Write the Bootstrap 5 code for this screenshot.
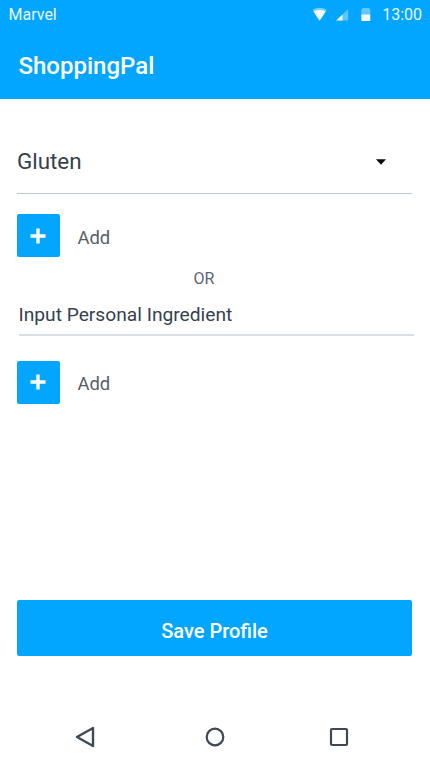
<!DOCTYPE html>
<html lang="en">
<head>
<meta charset="utf-8">
<meta name="viewport" content="width=device-width, initial-scale=1">
<title>ShoppingPal</title>
<link href="https://cdn.jsdelivr.net/npm/bootstrap@5.3.0/dist/css/bootstrap.min.css" rel="stylesheet">
<style>
  body { font-family: Roboto, "Liberation Sans", sans-serif; color: #35414e; height: 763px; overflow: hidden; line-height: 1; background: #fff; }
  svg { display: block; flex: none; }
  .app-header { background: #02a6ff; height: 98.5px; }
  .status-bar { height: 30px; padding: 0 8px 0 8.5px; font-size: 16px; color: #e8f7ff; }
  .app-title { font-size: 24px; font-weight: 500; margin: 24px 0 0 18.5px; line-height: 24px; }
  .app-body { padding: 0 17px; }
  .picker { height: 95px; padding: 32px 26px 0 0; border-bottom: 1px solid #b8c9dc !important; width: 395px; background: none; color: inherit; }
  .picker-label { font-size: 22.4px; line-height: 60px; padding-bottom: 2px; }
  .add-row { margin-top: 20.5px; }
  .add-row-custom { margin-top: 25px; }
  .plus-btn { width: 43px; height: 43px; background: #02a6ff; border-radius: 2px; }
  .plus-btn svg { margin-right: 1px; }
  .add-label { font-size: 18.4px; color: #55606b; margin-left: 17.5px; padding-top: 5px; }
  .divider-text { font-size: 16px; color: #5a6672; line-height: 16px; margin: 14px 0 0 176.5px; }
  .ingredient { font-size: 19.2px; height: 33px; width: 395px; margin: 15.5px 0 0 1.5px; padding: 0 0 7px; border-bottom: 2px solid #d8dfe9 !important; color: #35414e; background: none; }
  .ingredient::placeholder { color: #35414e; opacity: 1; }
  .save-btn, .save-btn:hover { width: 395px; height: 56px; margin-top: 196.5px; padding-top: 11px; background: #02a6ff; border-radius: 2px; font-size: 20px; font-weight: 500; color: #fff; }
  .system-nav { height: 53px; gap: 104px; }
  .back-icon { margin: 0 6px 0 -6px; }
</style>
</head>
<body class="d-flex flex-column">
  <header class="app-header text-white">
    <div class="status-bar d-flex align-items-center justify-content-between">
      <span>Marvel</span>
      <div class="d-flex align-items-center">
        <svg width="70" height="30" viewBox="0 0 70 30">
          <path d="M.5 9.700Q7.600 5.800 14.700 9.700L7.600 20.500z" fill="#7accff"/>
          <path d="M1.500 11.400Q7.600 8.800 13.700 11.400L7.600 20.800z" fill="#f0faff"/>
          <path d="M36.200 9V20.500H24.200z" fill="#5fc4ff"/>
          <path d="M30.500 14.500V20.500H24.200z" fill="#e8f7ff"/>
          <path d="M49.300 9.300L51 7.900H56.700L58.300 9.300V15H49.300z" fill="#65c7ff"/>
          <path d="M49.300 14.600H58.300V20.300Q58.300 21 57.500 21H50.100Q49.300 21 49.300 20.300z" fill="#f0faff"/>
        </svg>
        <span>13:00</span>
      </div>
    </div>
    <h1 class="app-title">ShoppingPal</h1>
  </header>

  <main class="app-body flex-grow-1">
    <button type="button" class="picker d-flex align-items-center justify-content-between border-0">
      <span class="picker-label">Gluten</span>
      <svg width="10" height="6" viewBox="0 0 10 6"><path d="M0 .2H10L5 5.700z" fill="#0a0a0a"/></svg>
    </button>

    <div class="add-row d-flex align-items-center">
      <button type="button" class="plus-btn btn border-0 p-0 d-flex align-items-center justify-content-center" aria-label="Add listed ingredient">
        <svg width="16" height="16" viewBox="0 0 16 16"><path d="M8 .5V15.500M.5 8H15.500" stroke="#fff" stroke-width="3.400"/></svg>
      </button>
      <span class="add-label">Add</span>
    </div>

    <div class="divider-text">OR</div>

    <input type="text" class="ingredient d-block border-0 rounded-0" placeholder="Input Personal Ingredient" aria-label="Personal ingredient">

    <div class="add-row-custom d-flex align-items-center">
      <button type="button" class="plus-btn btn border-0 p-0 d-flex align-items-center justify-content-center" aria-label="Add personal ingredient">
        <svg width="16" height="16" viewBox="0 0 16 16"><path d="M8 .5V15.500M.5 8H15.500" stroke="#fff" stroke-width="3.400"/></svg>
      </button>
      <span class="add-label">Add</span>
    </div>

    <button type="button" class="save-btn btn border-0 d-block">Save Profile</button>
  </main>

  <nav class="system-nav d-flex justify-content-center align-items-center" aria-label="System navigation">
    <svg class="back-icon" width="20" height="22" viewBox="0 0 20 22"><path d="M18 2V20L2 11z" fill="none" stroke="#3d4955" stroke-width="2.400" stroke-linejoin="round"/></svg>
    <svg width="20" height="20" viewBox="0 0 20 20"><circle cx="10" cy="10" r="8.300" fill="none" stroke="#3d4955" stroke-width="2.200"/></svg>
    <svg width="20" height="20" viewBox="0 0 20 20"><rect x="2" y="2" width="16" height="16" rx="1" fill="none" stroke="#3d4955" stroke-width="2.200"/></svg>
  </nav>
<script src="https://cdn.jsdelivr.net/npm/bootstrap@5.3.0/dist/js/bootstrap.bundle.min.js"></script>
</body>
</html>
